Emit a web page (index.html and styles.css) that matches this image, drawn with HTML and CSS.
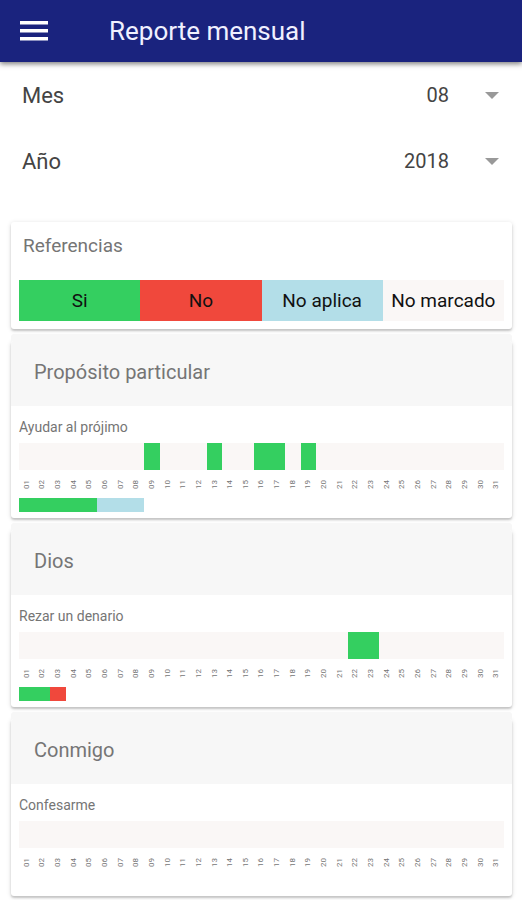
FILE: index.html
```html
<!DOCTYPE html>
<html lang="es">
<head>
    <meta charset="UTF-8">
    <meta name="viewport" content="width=device-width, initial-scale=1.0">
    <title>Reporte mensual</title>
    <link rel="stylesheet" href="styles.css">
</head>
<body>
    <header class="toolbar">
        <button class="menu-button" type="button" aria-label="Menú">
            <svg width="28" height="22" viewBox="0 0 28 22" fill="#fff">
                <rect y="1" width="28" height="3.5"/>
                <rect y="9" width="28" height="3.5"/>
                <rect y="17" width="28" height="3.5"/>
            </svg>
        </button>
        <h1>Reporte mensual</h1>
    </header>

    <form class="filters">
        <div class="filter">
            <label for="mes">Mes</label>
            <select id="mes">
                <option>07</option>
                <option selected>08</option>
                <option>09</option>
            </select>
            <svg class="arrow" width="14" height="7" viewBox="0 0 14 7"><path d="M0 0h14l-7 7z" fill="#999"/></svg>
        </div>
        <div class="filter">
            <label for="anio">Año</label>
            <select id="anio">
                <option>2017</option>
                <option selected>2018</option>
                <option>2019</option>
            </select>
            <svg class="arrow" width="14" height="7" viewBox="0 0 14 7"><path d="M0 0h14l-7 7z" fill="#999"/></svg>
        </div>
    </form>

    <main class="cards">
        <section class="card references">
            <h2>Referencias</h2>
            <div class="legend">
                <div class="si">Si</div>
                <div class="no">No</div>
                <div class="no-aplica">No aplica</div>
                <div class="no-marcado">No marcado</div>
            </div>
        </section>

        <section class="card">
            <h2 class="card-header">Propósito particular</h2>
            <div class="report" data-si="9,13,16,17,19" data-total="si:5,no-aplica:3">
                <h3>Ayudar al prójimo</h3>
            </div>
        </section>

        <section class="card">
            <h2 class="card-header">Dios</h2>
            <div class="report" data-si="22,23" data-total="si:2,no:1">
                <h3>Rezar un denario</h3>
            </div>
        </section>

        <section class="card">
            <h2 class="card-header">Conmigo</h2>
            <div class="report" data-si="" data-total="">
                <h3>Confesarme</h3>
            </div>
        </section>
    </main>

    <script>
        const DAYS = 31;

        function addRow(report, className) {
            const row = document.createElement("div");
            row.className = "row " + className;
            report.appendChild(row);
            return row;
        }

        function addCell(row, className, text) {
            const cell = document.createElement("span");
            cell.className = className;
            cell.textContent = text;
            row.appendChild(cell);
        }

        document.querySelectorAll(".report").forEach(report => {
            const marked = report.dataset.si.split(",");
            const marks = addRow(report, "marks");
            const days = addRow(report, "days");
            const total = addRow(report, "total");

            for (let day = 1; day <= DAYS; day++) {
                addCell(marks, marked.includes(String(day)) ? "si" : "no-marcado", "");
                addCell(days, "day", String(day).padStart(2, "0"));
            }

            // one cell per counted day, grouped by answer
            report.dataset.total.split(",").filter(Boolean).forEach(item => {
                const [name, count] = item.split(":");
                for (let i = 0; i < Number(count); i++) {
                    addCell(total, name, "");
                }
            });
        });
    </script>
</body>
</html>
```

FILE: styles.css
```css
* {
    box-sizing: border-box;
}
body {
    margin: 0;
    background: #fff;
    color: #444;
    font-family: Roboto, "Liberation Sans", sans-serif;
}
h1, h2, h3 {
    margin: 0;
    font-weight: 400;
}
.toolbar {
    display: flex;
    align-items: center;
    gap: 61px;
    height: 62px;
    padding: 0 20px;
    background: #1a237e;
    color: #f0f0ff;
    box-shadow: 0 2px 5px rgba(0, 0, 0, 0.5);
}
.toolbar h1 {
    font-size: 26px;
    line-height: 32px;
}
.menu-button {
    display: flex;
    padding: 0;
    border: 0;
    background: none;
    cursor: pointer;
}
.filters {
    padding-bottom: 28px;
}
.filter {
    display: flex;
    align-items: center;
    height: 66px;
    padding: 0 23px 0 22px;
    font-size: 22px;
}
.filter select {
    flex: 1;
    margin: 0 36px 0 20px;
    padding: 0;
    border: 0;
    background: none;
    appearance: none;
    color: #444;
    font-family: inherit;
    font-size: 20px;
    line-height: 32px;
    text-align: right;
    text-align-last: right;
}
.cards {
    display: flex;
    flex-direction: column;
    gap: 12px;
    padding: 0 10px 4px 11px;
}
.card {
    overflow: hidden;
    border-radius: 3px;
    background: #fff;
    color: #757575;
    box-shadow: 0 2px 2px rgba(0, 0, 0, 0.16), 0 1px 5px rgba(0, 0, 0, 0.14);
}
.card + .card {
    box-shadow: 0 2px 2px rgba(0, 0, 0, 0.16), 0 -7px 0 #f7f7f7, 0 1px 5px rgba(0, 0, 0, 0.14);
}
.card h2 {
    font-size: 20px;
    line-height: 24px;
}
.references {
    padding: 12px 8px 8px;
}
.card.references h2 {
    padding: 0 4px 22px;
    font-size: 19px;
}
.legend {
    display: grid;
    grid-template-columns: repeat(4, 1fr);
    color: #111;
    font-size: 19px;
    line-height: 41px;
    text-align: center;
    white-space: nowrap;
}
.card .card-header {
    padding: 19px 23px 22px;
    background: #f7f7f7;
}
.report {
    padding: 12px 8px 6px;
}
.report h3 {
    font-size: 14px;
    line-height: 18px;
}
.row {
    display: grid;
    grid-template-columns: repeat(31, 1fr);
}
.marks {
    height: 27px;
    margin-top: 7px;
}
.days {
    height: 28px;
    align-items: center;
    justify-items: center;
}
.day {
    font-size: 8px;
    line-height: 8px;
    writing-mode: vertical-rl;
    transform: rotate(180deg);
}
.total {
    height: 14px;
}
/* colores de las respuestas */
.si {
    background: #34cf60;
}
.no {
    background: #f0483c;
}
.no-aplica {
    background: #b3dee8;
}
.no-marcado {
    background: #faf7f6;
}
```
